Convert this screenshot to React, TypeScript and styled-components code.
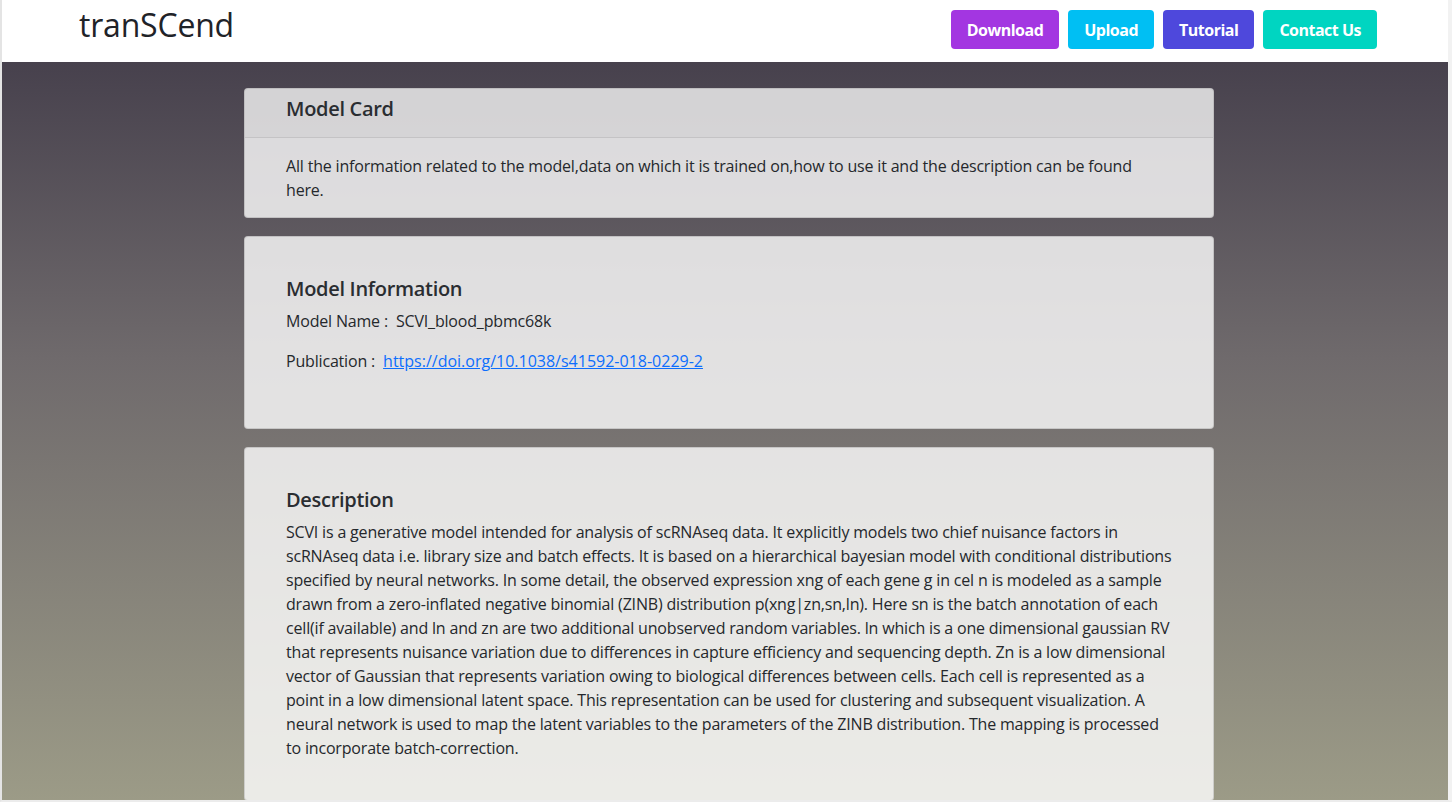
import React from "react";
import styled, { createGlobalStyle } from "styled-components";

const GlobalStyle = createGlobalStyle`
  html, body { margin: 0; padding: 0; }
  body {
    font-family: "Open Sans", "Noto Sans", sans-serif;
    color: #212529;
    overflow: hidden;
  }
  * { box-sizing: border-box; }
`;

const Frame = styled.div`
  width: 1452px;
  height: 802px;
  display: flex;
  flex-direction: column;
  border-left: 2px solid #e4e4e4;
  border-right: 4px solid #f2f2f2;
  border-bottom: 2px solid #ececec;
  overflow: hidden;
`;

const Header = styled.header`
  height: 62px;
  flex-shrink: 0;
  background: #ffffff;
  display: flex;
  align-items: flex-start;
  justify-content: space-between;
  padding: 0 71px 0 77px;
`;

const Logo = styled.div`
  font-family: "Open Sans", sans-serif;
  font-size: 32px;
  line-height: 50px;
  letter-spacing: -0.2px;
  color: #1f2328;
  font-weight: 500;
`;

const Nav = styled.nav`
  display: flex;
  gap: 9px;
  padding-top: 10px;
`;

const NavButton = styled.button<{ $bg: string }>`
  height: 39px;
  padding: 0 16px;
  border: none;
  border-radius: 4px;
  background: ${(p) => p.$bg};
  color: #ffffff;
  font-family: "Open Sans", sans-serif;
  font-weight: 700;
  font-size: 16px;
  letter-spacing: -0.5px;
  cursor: pointer;
`;

const Main = styled.main`
  flex: 1;
  background: linear-gradient(180deg, #47414d 0%, #6f6a6c 40%, #9c9b87 100%);
  display: flex;
  flex-direction: column;
  align-items: center;
  gap: 18px;
  padding: 26px 0 0 8px;
`;

const Card = styled.section`
  width: 970px;
  flex-shrink: 0;
  background: rgba(255, 255, 255, 0.8);
  border: 1px solid rgba(0, 0, 0, 0.125);
  border-radius: 4px;
  overflow: hidden;
`;

const CardHeader = styled.div`
  background: rgba(0, 0, 0, 0.03);
  border-bottom: 1px solid rgba(0, 0, 0, 0.08);
  padding: 8px 41px 16px;
`;

const CardBody = styled.div<{ $pad: string }>`
  padding: ${(p) => p.$pad};
`;

const Title = styled.h5`
  margin: 0 0 8px;
  font-size: 20px;
  line-height: 24px;
  font-weight: 600;
  letter-spacing: -0.3px;
  color: #2a2d31;
`;

const HeaderTitle = styled(Title)`
  margin: 0;
`;

const Text = styled.p<{ $mb?: number }>`
  margin: 0 0 ${(p) => p.$mb ?? 0}px;
  font-size: 16px;
  line-height: 24px;
  letter-spacing: -0.18px;
  color: #25282c;
`;

const Label = styled.span`
  margin-right: 8px;
`;

const Link = styled.a`
  color: #0d6efd;
  text-decoration: underline;
  letter-spacing: 0;
`;

export default function App() {
  return (
    <>
      <GlobalStyle />
      <Frame>
        <Header>
          <Logo>tranSCend</Logo>
          <Nav>
            <NavButton $bg="#a336e1">Download</NavButton>
            <NavButton $bg="#00bff3">Upload</NavButton>
            <NavButton $bg="#4e48dc">Tutorial</NavButton>
            <NavButton $bg="#00d5c1">Contact Us</NavButton>
          </Nav>
        </Header>
        <Main>
          <Card>
            <CardHeader>
              <HeaderTitle>Model Card</HeaderTitle>
            </CardHeader>
            <CardBody $pad="16px 80px 15px 41px">
              <Text>
                All the information related to the model,data on which it is trained on,how to use it and the
                description can be found here.
              </Text>
            </CardBody>
          </Card>
          <Card>
            <CardBody $pad="40px 41px 39px">
              <Title>Model Information</Title>
              <Text $mb={16}>
                <Label>Model Name :</Label>SCVI_blood_pbmc68k
              </Text>
              <Text $mb={16}>
                <Label>Publication :</Label>
                <Link href="#">https://doi.org/10.1038/s41592-018-0229-2</Link>
              </Text>
            </CardBody>
          </Card>
          <Card>
            <CardBody $pad="40px 41px 40px">
              <Title>Description</Title>
              <Text>
                SCVI is a generative model intended for analysis of scRNAseq data. It explicitly models two chief
                nuisance factors in scRNAseq data i.e. library size and batch effects. It is based on a hierarchical
                bayesian model with conditional distributions specified by neural networks. In some detail, the
                observed expression xng of each gene g in cel n is modeled as a sample drawn from a zero-inflated
                negative binomial (ZINB) distribution p(xng|zn,sn,ln). Here sn is the batch annotation of each
                cell(if available) and ln and zn are two additional unobserved random variables. ln which is a one
                dimensional gaussian RV that represents nuisance variation due to differences in capture efficiency
                and sequencing depth. Zn is a low dimensional vector of Gaussian that represents variation owing to
                biological differences between cells. Each cell is represented as a point in a low dimensional latent
                space. This representation can be used for clustering and subsequent visualization. A neural network
                is used to map the latent variables to the parameters of the ZINB distribution. The mapping is
                processed to incorporate batch-correction.
              </Text>
            </CardBody>
          </Card>
        </Main>
      </Frame>
    </>
  );
}
